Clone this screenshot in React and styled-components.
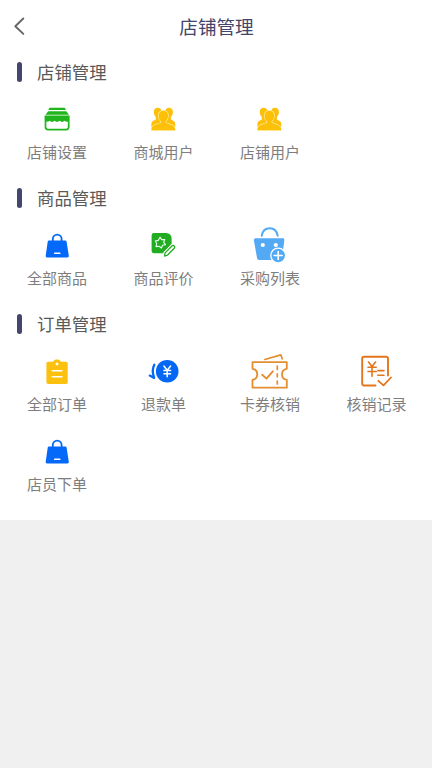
import React from 'react'
import styled, { createGlobalStyle } from 'styled-components'

const GlobalStyle = createGlobalStyle`
  body {
    margin: 0;
    background: #f0f0f0;
    font-family: 'Noto Sans CJK SC', sans-serif;
  }
`

const Page = styled.main`
  background: #fff;
  padding-bottom: 13px;
`

const Header = styled.header`
  display: grid;
  grid-template-columns: 41px 1fr 40px;
  align-items: center;
  height: 49px;
`

const Back = styled.button`
  display: flex;
  height: 49px;
  padding: 17px 0 0 13px;
  border: 0;
  background: none;
`

const Title = styled.h1`
  margin: 0;
  padding-top: 2px;
  color: #41456b;
  font-size: 18.6px;
  font-weight: 400;
  line-height: 26px;
  text-align: center;
`

const SectionTitle = styled.h2`
  display: flex;
  align-items: center;
  gap: 15px;
  height: 46px;
  margin: 0;
  padding-left: 17px;
  color: #5a5a5a;
  font-size: 17.4px;
  font-weight: 400;
  line-height: 24px;

  &::before {
    content: '';
    width: 5px;
    height: 20px;
    border-radius: 2.5px;
    background: #43476d;
  }
`

const Grid = styled.div`
  display: grid;
  grid-template-columns: repeat(4, 106.5px);
  padding-left: 4px;
`

const Item = styled.div`
  display: flex;
  flex-direction: column;
  align-items: center;
  height: 74px;
  padding-top: 6px;
`

const Icon = styled.svg`
  width: 36px;
  height: 36px;
  margin-bottom: 4px;
  overflow: visible;
  color: ${({ $color }) => $color};
  fill: none;
  stroke-linecap: round;
  stroke-linejoin: round;
`

const Label = styled.span`
  padding-right: 0.5px;
  color: #7e7e7e;
  font-size: 15px;
  line-height: 22px;
`

const icons = {
  shop: {
    color: '#20b51c',
    art: (
      <>
        <path d="M10.5 6.7h15.3l1.2 2.3H9.3z" fill="currentColor" />
        <path d="M9.2 10.2h18l2.8 3.6H6.4z" fill="currentColor" />
        <path d="M5.6 14.6h25v4.1a3 3 0 0 1-5 1.1 3.8 3.8 0 0 1-5 0 3.8 3.8 0 0 1-5 0 3.8 3.8 0 0 1-5 0 3 3 0 0 1-5-1.1z" fill="currentColor" />
        <path d="M6.5 19v7a2.6 2.6 0 0 0 2.6 2.6h18a2.6 2.6 0 0 0 2.6-2.6v-7" stroke="currentColor" strokeWidth="1.7" />
      </>
    ),
  },
  users: {
    color: '#fcc008',
    art: (
      <>
        <path d="M11.7 6.7c2.5 0 4 1.8 4 4.3 0 2-.7 3.8-1.9 4.8v2l3.2 2V26H5.4v-2.2c0-3 .7-3.6 4.4-5.4v-2.6c-1.3-1-2-2.8-2-4.8 0-2.5 1.4-4.3 3.9-4.3z" fill="currentColor" />
        <path d="M23 6.7c-2.5 0-4 1.8-4 4.3 0 2 .7 3.8 1.9 4.8v2l-3.2 2V26h11.6v-2.2c0-3-.7-3.6-4.4-5.4v-2.6c1.3-1 2-2.8 2-4.8 0-2.5-1.4-4.3-3.9-4.3z" fill="currentColor" />
        <path d="M17.3 9.8c3.1 0 4.8 2.2 4.8 5 0 2.3-.9 4.3-2.4 5.5V22c5.800 1.600 9 2.600 9.400 6v1.300H5.500V28c.4-3.400 3.600-4.400 9.400-6v-1.700c-1.500-1.200-2.400-3.200-2.400-5.500 0-2.800 1.700-5 4.800-5z" fill="currentColor" stroke="#fff3bd" strokeWidth="1.2" paintOrder="stroke" />
      </>
    ),
  },
  bag: {
    color: '#0468f8',
    art: (
      <>
        <path d="M13.8 14.3V12a4.4 4.4 0 0 1 8.8 0v2.3" stroke="currentColor" strokeWidth="1.8" />
        <path d="M10.2 13.6h15.9c.8 0 1.3.5 1.5 1.2l2.2 14c.1 1-.5 1.6-1.4 1.6H8c-.9 0-1.4-.6-1.3-1.6l2-14c.1-.7.7-1.2 1.5-1.2z" fill="currentColor" />
        <path d="M15.7 26.2h5.1" stroke="#fff" strokeWidth="1.6" />
      </>
    ),
  },
  review: {
    color: '#22ac22',
    art: (
      <>
        <path d="M8 6h12.3a5.3 5.3 0 0 1 5.3 5.3v5.5L17 26.2H8A2.4 2.4 0 0 1 5.6 24V8.4A2.4 2.4 0 0 1 8 6z" fill="currentColor" />
        <path d="m14.1 10.2 1.6 2.4 3.1-.1-1.1 2.8 1.8 2.4-3 .6-1 2.7-2.5-1.8-3 .4.7-3-1.4-2.6 2.9-.6z" stroke="#e6ffe6" strokeWidth="1.1" />
        <path d="m19.1 25.9 6.8-6.9a1.5 1.5 0 0 1 2.3 2.2l-6.8 7-2.9.9z" fill="#fff" stroke="#fff" strokeWidth="3.2" />
        <path d="m19.1 25.9 6.8-6.9a1.5 1.5 0 0 1 2.3 2.2l-6.8 7-2.9.9z" fill="#fff" stroke="currentColor" strokeWidth="1.3" />
      </>
    ),
  },
  purchase: {
    color: '#53a9f4',
    art: (
      <>
        <path d="M9.7 8.8C10.5 4 13.4 1.3 17.7 1.3S24.8 4 25.7 8.8" stroke="currentColor" strokeWidth="2" />
        <path d="M4 11.2h26.7c1.4 0 1.8.9 1.6 2.1l-2.2 17.4c-.2 1.5-1.1 2.2-2.6 2.2h-20c-1.5 0-2.3-.7-2.5-2.2L1.9 13.4c-.2-1.3.6-2.2 2.1-2.2z" fill="currentColor" />
        <circle cx="10.8" cy="18" r="2.1" fill="#fff" />
        <circle cx="23.8" cy="18" r="2.1" fill="#fff" />
        <circle cx="26.2" cy="28.5" r="7.4" fill="currentColor" stroke="#fff" strokeWidth="1.3" />
        <path d="M22.2 28.5h8m-4-4v8" stroke="#fff" strokeWidth="1.6" />
      </>
    ),
  },
  orders: {
    color: '#fcc00e',
    art: (
      <>
        <path d="M9.3 8.7h4.5c.9-.6 1.3-2.3 4.2-2.3s3.3 1.7 4.2 2.3h4.6c1.2 0 1.9.7 1.9 1.9v18.5c0 1.2-.7 1.9-1.9 1.9H9.3c-1.2 0-1.9-.7-1.9-1.9V10.6c0-1.2.7-1.9 1.9-1.9z" fill="currentColor" />
        <circle cx="18" cy="11" r="1.4" fill="#fff" />
        <path d="M13.3 17.7h9.6m-9.6 6h9.6" stroke="#fff" strokeWidth="1.6" />
      </>
    ),
  },
  refund: {
    color: '#0468f5',
    art: (
      <>
        <circle cx="21.2" cy="18.2" r="11.3" fill="currentColor" />
        <path d="m17.9 13 3.3 4.3 3.4-4.3m-6.7 4.5h6.7m-6.7 3.3h6.7m-3.4-3.2v6.2" stroke="#fff" strokeWidth="1.5" />
        <path d="M8.3 11.8c-2 3.8-2 8-.2 12.8M3.8 22.6l4.3 2.3" stroke="currentColor" strokeWidth="2.3" />
      </>
    ),
  },
  ticket: {
    color: '#e48e30',
    art: (
      <>
        <path d="m12.8 6.5 16-4.6 1.5 4" stroke="currentColor" strokeWidth="1.7" />
        <path d="M.5 9.2h34.3v6.6c-3 .5-4.8 2.5-4.8 5.4s1.8 5.2 4.800 5.700v7.800H.5v-7.800c3-.5 4.800-2.700 4.800-5.700S3.500 16.300.5 15.800z" stroke="currentColor" strokeWidth="1.8" />
        <path d="m10.2 21.8 4.3 3.8 6.3-7.3" stroke="currentColor" strokeWidth="1.9" />
        <path d="M25.3 13v3.500m0 4.300v3m0 4.200v3" stroke="currentColor" strokeWidth="1.7" />
      </>
    ),
  },
  record: {
    color: '#e2761f',
    art: (
      <>
        <path d="M16.5 32.5H5a1.8 1.8 0 0 1-1.8-1.8V5.5A1.8 1.8 0 0 1 5 3.7h22.2A1.8 1.8 0 0 1 29 5.5v17" stroke="currentColor" strokeWidth="1.9" />
        <path d="M9.5 9l3.5 4.5L16.500 9M9 14.200h8.200M9 18.500h8.200M13 13.500v9.700M18.800 17.600H25m-6.200 4.700H25" stroke="currentColor" strokeWidth="1.6" />
        <path d="m19.3 27.8 5.2 4.600 7.500-7.900" stroke="currentColor" strokeWidth="1.8" />
      </>
    ),
  },
}

const sections = [
  {
    title: '店铺管理',
    items: [
      { label: '店铺设置', icon: 'shop' },
      { label: '商城用户', icon: 'users' },
      { label: '店铺用户', icon: 'users' },
    ],
  },
  {
    title: '商品管理',
    items: [
      { label: '全部商品', icon: 'bag' },
      { label: '商品评价', icon: 'review' },
      { label: '采购列表', icon: 'purchase' },
    ],
  },
  {
    title: '订单管理',
    items: [
      { label: '全部订单', icon: 'orders' },
      { label: '退款单', icon: 'refund' },
      { label: '卡券核销', icon: 'ticket' },
      { label: '核销记录', icon: 'record' },
      { label: '店员下单', icon: 'bag' },
    ],
  },
]

const MenuItem = ({ label, icon }) => (
  <Item>
    <Icon $color={icons[icon].color} viewBox="0 0 36 36" aria-hidden="true">
      {icons[icon].art}
    </Icon>
    <Label>{label}</Label>
  </Item>
)

export default () => (
  <>
    <GlobalStyle />
    <Page>
      <Header>
        <Back aria-label="返回">
          <svg width="12" height="19" viewBox="0 0 12 19" fill="none">
            <path
              d="M10.3 1.5 2.3 9.3l8 7.6"
              stroke="#666"
              strokeWidth="1.9"
              strokeLinecap="round"
              strokeLinejoin="round"
            />
          </svg>
        </Back>
        <Title>店铺管理</Title>
      </Header>
      {sections.map(({ title, items }) => (
        <section key={title}>
          <SectionTitle>{title}</SectionTitle>
          <Grid>
            {items.map(item => (
              <MenuItem key={item.label} {...item} />
            ))}
          </Grid>
        </section>
      ))}
    </Page>
  </>
)
